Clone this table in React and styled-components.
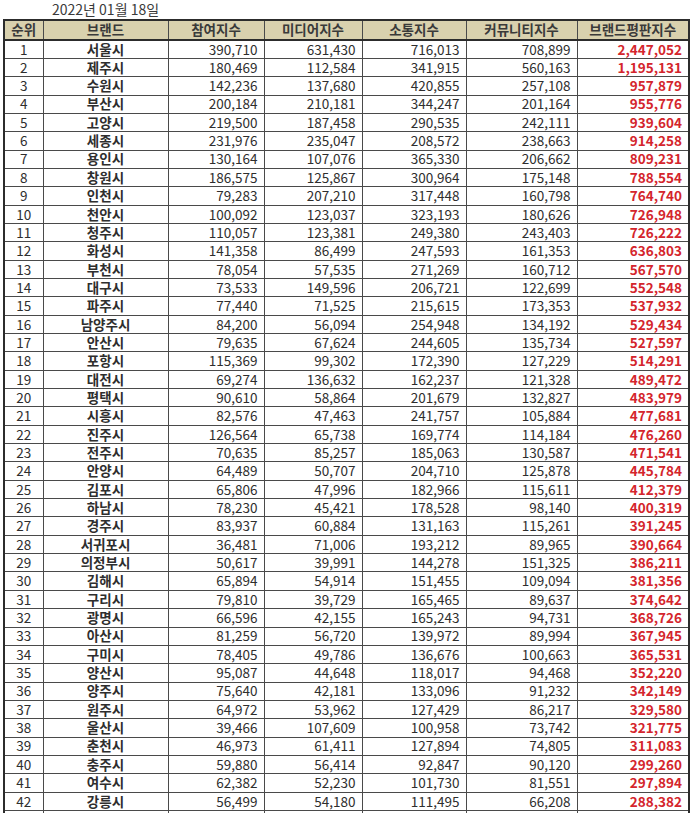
import React from 'react'
import styled, { createGlobalStyle } from 'styled-components'

const GlobalStyle = createGlobalStyle`
  html, body {
    margin: 0;
    padding: 0;
    background: #ffffff;
    overflow: hidden;
  }
  body {
    font-family: "Noto Sans CJK KR", "Noto Sans", sans-serif;
  }
`

const Page = styled.div`
  width: 700px;
  height: 813px;
  overflow: hidden;
  background: #ffffff;
`

const DateLine = styled.div`
  height: 19px;
  padding: 1px 0 0 52px;
  box-sizing: border-box;
  font-size: 14px;
  line-height: 17px;
  color: #3a3a3a;
`

const Table = styled.table`
  margin-left: 3px;
  width: 685px;
  table-layout: fixed;
  border-collapse: collapse;
  border: 2px solid #2c2c2c;
  font-size: 13.5px;
  color: #2e2e2e;
`

const HeadCell = styled.th`
  height: 18px;
  padding: 0;
  background: #d9d1ae;
  border: 1px solid #4a4a4a;
  border-bottom: 2px solid #2c2c2c;
  font-weight: 700;
  color: #3a3a3a;
  text-align: center;
  line-height: 1;
`

const Row = styled.tr`
  height: 18.35px;
`

const Cell = styled.td`
  padding: 0 ${p => (p.$align === 'right' ? '6px' : '0')} 0 0;
  border: 1px solid #4a4a4a;
  text-align: ${p => p.$align || 'center'};
  font-weight: ${p => (p.$bold ? 700 : 400)};
  color: ${p => p.$color || '#2e2e2e'};
  line-height: 1;
  white-space: nowrap;
`

const columns = [
  { title: '순위', width: 39 },
  { title: '브랜드', width: 125 },
  { title: '참여지수', width: 96 },
  { title: '미디어지수', width: 98 },
  { title: '소통지수', width: 104 },
  { title: '커뮤니티지수', width: 111 },
  { title: '브랜드평판지수', width: 112 },
]

const rows = [
  ['서울시', '390,710', '631,430', '716,013', '708,899', '2,447,052'],
  ['제주시', '180,469', '112,584', '341,915', '560,163', '1,195,131'],
  ['수원시', '142,236', '137,680', '420,855', '257,108', '957,879'],
  ['부산시', '200,184', '210,181', '344,247', '201,164', '955,776'],
  ['고양시', '219,500', '187,458', '290,535', '242,111', '939,604'],
  ['세종시', '231,976', '235,047', '208,572', '238,663', '914,258'],
  ['용인시', '130,164', '107,076', '365,330', '206,662', '809,231'],
  ['창원시', '186,575', '125,867', '300,964', '175,148', '788,554'],
  ['인천시', '79,283', '207,210', '317,448', '160,798', '764,740'],
  ['천안시', '100,092', '123,037', '323,193', '180,626', '726,948'],
  ['청주시', '110,057', '123,381', '249,380', '243,403', '726,222'],
  ['화성시', '141,358', '86,499', '247,593', '161,353', '636,803'],
  ['부천시', '78,054', '57,535', '271,269', '160,712', '567,570'],
  ['대구시', '73,533', '149,596', '206,721', '122,699', '552,548'],
  ['파주시', '77,440', '71,525', '215,615', '173,353', '537,932'],
  ['남양주시', '84,200', '56,094', '254,948', '134,192', '529,434'],
  ['안산시', '79,635', '67,624', '244,605', '135,734', '527,597'],
  ['포항시', '115,369', '99,302', '172,390', '127,229', '514,291'],
  ['대전시', '69,274', '136,632', '162,237', '121,328', '489,472'],
  ['평택시', '90,610', '58,864', '201,679', '132,827', '483,979'],
  ['시흥시', '82,576', '47,463', '241,757', '105,884', '477,681'],
  ['진주시', '126,564', '65,738', '169,774', '114,184', '476,260'],
  ['전주시', '70,635', '85,257', '185,063', '130,587', '471,541'],
  ['안양시', '64,489', '50,707', '204,710', '125,878', '445,784'],
  ['김포시', '65,806', '47,996', '182,966', '115,611', '412,379'],
  ['하남시', '78,230', '45,421', '178,528', '98,140', '400,319'],
  ['경주시', '83,937', '60,884', '131,163', '115,261', '391,245'],
  ['서귀포시', '36,481', '71,006', '193,212', '89,965', '390,664'],
  ['의정부시', '50,617', '39,991', '144,278', '151,325', '386,211'],
  ['김해시', '65,894', '54,914', '151,455', '109,094', '381,356'],
  ['구리시', '79,810', '39,729', '165,465', '89,637', '374,642'],
  ['광명시', '66,596', '42,155', '165,243', '94,731', '368,726'],
  ['아산시', '81,259', '56,720', '139,972', '89,994', '367,945'],
  ['구미시', '78,405', '49,786', '136,676', '100,663', '365,531'],
  ['양산시', '95,087', '44,648', '118,017', '94,468', '352,220'],
  ['양주시', '75,640', '42,181', '133,096', '91,232', '342,149'],
  ['원주시', '64,972', '53,962', '127,429', '86,217', '329,580'],
  ['울산시', '39,466', '107,609', '100,958', '73,742', '321,775'],
  ['춘천시', '46,973', '61,411', '127,894', '74,805', '311,083'],
  ['충주시', '59,880', '56,414', '92,847', '90,120', '299,260'],
  ['여수시', '62,382', '52,230', '101,730', '81,551', '297,894'],
  ['강릉시', '56,499', '54,180', '111,495', '66,208', '288,382'],
  ['', '', '', '', '', ''],
]

export default function App() {
  return (
    <Page>
      <GlobalStyle />
      <DateLine>2022년 01월 18일</DateLine>
      <Table>
        <colgroup>
          {columns.map(c => (
            <col key={c.title} style={{ width: c.width }} />
          ))}
        </colgroup>
        <thead>
          <tr>
            {columns.map(c => (
              <HeadCell key={c.title}>{c.title}</HeadCell>
            ))}
          </tr>
        </thead>
        <tbody>
          {rows.map((r, i) => (
            <Row key={i}>
              <Cell>{r[0] ? i + 1 : ''}</Cell>
              <Cell $bold>{r[0]}</Cell>
              <Cell $align="right">{r[1]}</Cell>
              <Cell $align="right">{r[2]}</Cell>
              <Cell $align="right">{r[3]}</Cell>
              <Cell $align="right">{r[4]}</Cell>
              <Cell $align="right" $bold $color="#d4252c">
                {r[5]}
              </Cell>
            </Row>
          ))}
        </tbody>
      </Table>
    </Page>
  )
}
